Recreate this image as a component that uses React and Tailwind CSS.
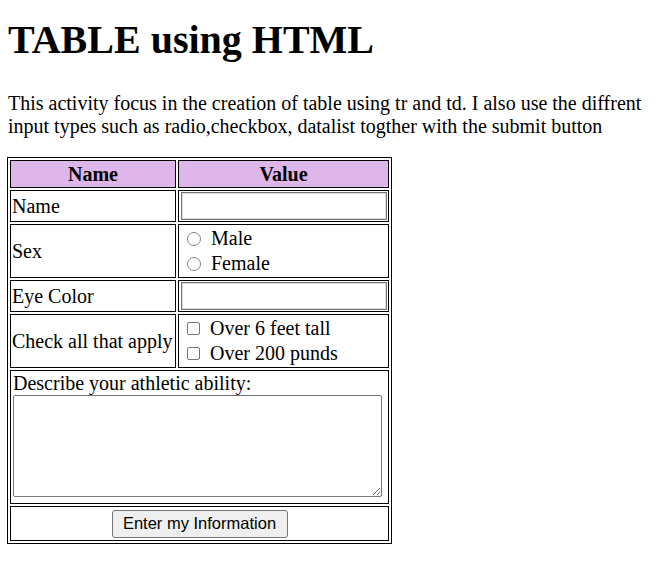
import React from 'react';

const serif = "font-['Liberation_Serif','Times_New_Roman',serif]";

const Cell = ({ children, className = '', colSpan }) => (
    <td colSpan={colSpan} className={`border border-black p-px align-middle ${className}`}>{children}</td>
);

const Choice = ({ type, name, label }) => (
    <label className="flex items-center h-[25px]">
        {type === 'radio' ? (
            <input
                type="radio"
                name={name}
                className="appearance-none w-[14px] h-[14px] ml-[7px] rounded-full border border-[#858585] bg-white shrink-0"
            />
        ) : (
            <input
                type="checkbox"
                className="appearance-none w-[13px] h-[13px] ml-[7px] rounded-[2px] border border-[#767676] bg-white shrink-0"
            />
        )}
        <span className="ml-[10px]">{label}</span>
    </label>
);

const TextBox = () => (
    <input
        type="text"
        className="block w-[206px] h-[28px] ml-px border border-[#767676] shadow-[inset_0_0_0_1px_#dcdcdc] bg-white outline-none"
    />
);

export default function App() {
    return (
        <div className={`${serif} text-black bg-white min-h-[576px] pl-[7px] pt-[17px]`}>
            <h1 className="text-[40px] font-bold leading-[46px] pl-px">TABLE using HTML</h1>

            <p className="mt-[29px] text-[20px] leading-[23px] pl-px">
                <span className="block whitespace-nowrap">
                    This activity focus in the creation of table using tr and td. I also use the diffrent
                </span>
                <span className="block whitespace-nowrap">
                    input types such as radio,checkbox, datalist togther with the submit button
                </span>
            </p>

            <table className="mt-[19px] border border-black border-separate border-spacing-[2px] text-[20px] leading-[23px] w-[385px] table-fixed">
                <colgroup>
                    <col className="w-[166px]" />
                    <col className="w-[211px]" />
                </colgroup>
                <thead>
                    <tr>
                        <th className="border border-black p-px bg-[#deb6ea] font-bold">
                            <div className="h-[24px] flex items-center justify-center">Name</div>
                        </th>
                        <th className="border border-black p-px bg-[#deb6ea] font-bold">
                            <div className="h-[24px] flex items-center justify-center">Value</div>
                        </th>
                    </tr>
                </thead>
                <tbody>
                    <tr>
                        <Cell><div className="h-[28px] flex items-center">Name</div></Cell>
                        <Cell><div className="h-[28px] flex items-center"><TextBox /></div></Cell>
                    </tr>
                    <tr>
                        <Cell><div className="h-[50px] flex items-center">Sex</div></Cell>
                        <Cell>
                            <div className="h-[50px] flex flex-col justify-center">
                                <Choice type="radio" name="sex" label="Male" />
                                <Choice type="radio" name="sex" label="Female" />
                            </div>
                        </Cell>
                    </tr>
                    <tr>
                        <Cell><div className="h-[28px] flex items-center">Eye Color</div></Cell>
                        <Cell><div className="h-[28px] flex items-center"><TextBox /></div></Cell>
                    </tr>
                    <tr>
                        <Cell><div className="h-[50px] flex items-center whitespace-nowrap">Check all that apply</div></Cell>
                        <Cell>
                            <div className="h-[50px] flex flex-col justify-center">
                                <Choice type="checkbox" label="Over 6 feet tall" />
                                <Choice type="checkbox" label="Over 200 punds" />
                            </div>
                        </Cell>
                    </tr>
                    <tr>
                        <Cell colSpan={2} className="align-top">
                            <div className="h-[130px]">
                                <div className="h-[23px] pl-px whitespace-nowrap">Describe your athletic ability:</div>
                                <textarea className="block w-[369px] h-[102px] ml-px border border-[#767676] rounded-[2px] bg-white resize outline-none" />
                            </div>
                        </Cell>
                    </tr>
                    <tr>
                        <Cell colSpan={2}>
                            <div className="h-[31px] flex items-center justify-center">
                                <button
                                    type="submit"
                                    className="font-['Liberation_Sans',Arial,sans-serif] text-[16.5px] leading-none h-[28px] w-[176px] bg-[#efefef] border border-[#767676] rounded-[3px] text-black"
                                >
                                    Enter my Information
                                </button>
                            </div>
                        </Cell>
                    </tr>
                </tbody>
            </table>
        </div>
    );
}
